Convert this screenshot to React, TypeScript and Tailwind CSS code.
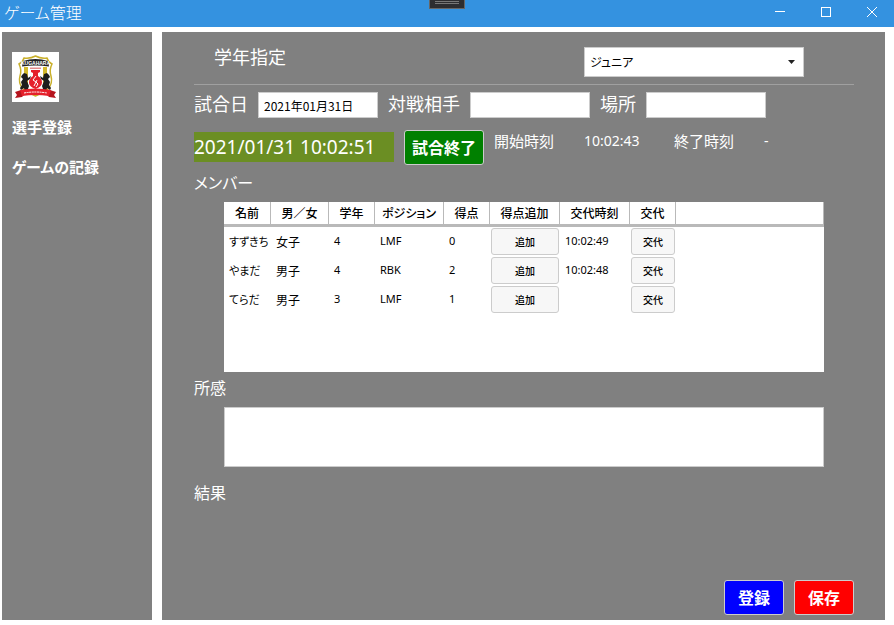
import { useState } from "react";

type Member = {
  name: string;
  gender: string;
  grade: number;
  position: string;
  score: number;
  changedAt: string;
};

const members: Member[] = [
  { name: "すずきち", gender: "女子", grade: 4, position: "LMF", score: 0, changedAt: "10:02:49" },
  { name: "やまだ", gender: "男子", grade: 4, position: "RBK", score: 2, changedAt: "10:02:48" },
  { name: "てらだ", gender: "男子", grade: 3, position: "LMF", score: 1, changedAt: "" },
];

const columns = [
  { label: "名前", width: "w-[47px]" },
  { label: "男／女", width: "w-[58px]" },
  { label: "学年", width: "w-[46px]" },
  { label: "ポジション", width: "w-[69px]" },
  { label: "得点", width: "w-[46px]" },
  { label: "得点追加", width: "w-[70px]" },
  { label: "交代時刻", width: "w-[70px]" },
  { label: "交代", width: "w-[46px]" },
];

function Emblem() {
  return (
    <svg viewBox="0 0 47 50" className="h-[50px] w-[47px]" role="img" aria-label="クラブのエンブレム">
      <rect width="47" height="50" fill="#fff" />
      <path
        d="M12 6 Q18 7 23.500 4 Q29 7 35 6 Q36 10 40 12 Q37 18 39 24 Q41 31 36 37 Q31 41 23.500 44 Q16 41 11 37 Q6 31 8 24 Q10 18 7 12 Q11 10 12 6Z"
        fill="#fff"
        stroke="#c9b02c"
        strokeWidth="1.500"
      />
      <path d="M12 15h4v23h-4z M31 15h4v23h-4z" fill="#d3b92d" />
      <path d="M11 9 Q23.500 5 36 9 L37 14.500 Q23.500 12.500 10 14.500Z" fill="#222" />
      <text x="23.500" y="12.500" textAnchor="middle" className="fill-white font-['Liberation_Sans'] text-[5px] font-bold">
        KUGAHARA
      </text>
      <path d="M18 15.500h11v1.500H18z" fill="#e58b8b" />
      <path d="M19 18h9v2l-2 1v3q4 2.500 4 6.500t-6.500 6.500q-6.500-2.500-6.500-6.500t4-6.500v-3l-2-1z" fill="#e5202b" />
      <path d="M24 24l-3 4 3 2-2 4M25 28l-1 2 2 2-2 3" fill="none" stroke="#fff" strokeWidth="1" />
      <path
        d="M10 23l2-2 3 1 1 4 3-2-1 3-3 2 2 5-1 3 1 2h-4l-1-3-3 2-1-2 2-3-1-3 2-3-2-2z"
        fill="#1d1d1d"
      />
      <path
        d="M37 23l-2-2-3 1-1 4-3-2 1 3 3 2-2 5 1 3-1 2h4l1-3 3 2 1-2-2-3 1-3-2-3 2-2z"
        fill="#1d1d1d"
      />
      <path d="M3 40l6-2 3 5-2 2-7 1 2-3zM44 40l-6-2-3 5 2 2 7 1-2-3z" fill="#b5141e" />
      <path d="M8 38 Q23.500 35 39 38 L37 44 Q23.500 42 10 44Z" fill="#e5202b" />
      <path d="M12 41 Q23.500 39 35 41" fill="none" stroke="#fff" strokeWidth="1" strokeDasharray="2 .6" />
    </svg>
  );
}

const captionButton = "flex h-6 w-[46px] items-center justify-center pl-[2px]";

function TitleBar() {
  return (
    <header className="relative flex h-[27px] shrink-0 items-start justify-between bg-[#3492e0] text-white">
      <h1 className="pl-1 text-base leading-6 font-light">ゲーム管理</h1>
      <div className="absolute top-0 left-1/2 flex h-[9px] w-9 -translate-x-1/2 flex-col items-center gap-px border border-t-0 border-[#666] bg-[#2d2d30] pt-px">
        <span className="h-px w-6 bg-[#777]" />
        <span className="h-px w-6 bg-[#777]" />
      </div>
      <div className="flex">
        <button type="button" aria-label="最小化" className={captionButton}>
          <svg width="10" height="10" viewBox="0 0 10 10" shapeRendering="crispEdges">
            <path d="M0 4h10v1H0z" fill="currentColor" />
          </svg>
        </button>
        <button type="button" aria-label="最大化" className={captionButton}>
          <svg width="10" height="10" viewBox="0 0 10 10" shapeRendering="crispEdges">
            <path d="M.5 .5h9v9h-9z" fill="none" stroke="currentColor" />
          </svg>
        </button>
        <button type="button" aria-label="閉じる" className={captionButton}>
          <svg width="10" height="10" viewBox="0 0 10 10">
            <path d="M0 0l10 10M10 0L0 10" stroke="currentColor" />
          </svg>
        </button>
      </div>
    </header>
  );
}

function Field({ id, label, initial = "" }: { id: string; label: string; initial?: string }) {
  const [value, setValue] = useState(initial);
  return (
    <div className="flex items-start gap-[10px]">
      <label htmlFor={id} className="text-lg leading-[22px]">
        {label}
      </label>
      <input
        id={id}
        type="text"
        value={value}
        onChange={(e) => setValue(e.target.value)}
        className="h-[26px] w-[120px] border border-[#ccc] bg-white px-[5px] text-xs text-black"
      />
    </div>
  );
}

const rowButton =
  "block h-[27px] w-full rounded-[3px] border border-[#ccc] bg-[#f7f7f7] text-[10px] font-medium text-black";
const actionButton = "h-[35px] rounded-[3px] border border-[#ccc] pb-[2px] text-base font-bold";
const latinCell = "p-0 pl-[5px] font-['Noto_Sans'] text-[11px]";

function MemberTable() {
  return (
    <div className="mx-[30px] min-h-[170px] bg-white text-black">
      <table aria-label="メンバー" className="w-full table-fixed border-separate border-spacing-0 text-left text-xs">
        <thead>
          <tr>
            {columns.map((c) => (
              <th
                key={c.label}
                scope="col"
                className={`${c.width} h-[25px] border-r border-b-3 border-[#b9b9b9] p-0 text-center font-medium whitespace-nowrap`}
              >
                {c.label}
              </th>
            ))}
            <td className="border-r border-b-3 border-[#b9b9b9] p-0" />
          </tr>
        </thead>
        <tbody>
          {members.map((m) => (
            <tr key={m.name} className="h-[29px]">
              <td className="p-0 pl-[5px] text-[11px] whitespace-nowrap">{m.name}</td>
              <td className="p-0 pl-[5px]">{m.gender}</td>
              <td className={latinCell}>{m.grade}</td>
              <td className={latinCell}>{m.position}</td>
              <td className={latinCell}>{m.score}</td>
              <td className="px-px py-0">
                <button type="button" className={rowButton}>
                  追加
                </button>
              </td>
              <td className={latinCell}>{m.changedAt}</td>
              <td className="px-px py-0">
                <button type="button" className={rowButton}>
                  交代
                </button>
              </td>
              <td className="p-0" />
            </tr>
          ))}
        </tbody>
      </table>
    </div>
  );
}

export default function App() {
  return (
    <div className="flex min-h-screen flex-col bg-white font-['Noto_Sans_CJK_JP',sans-serif] text-white [font-feature-settings:'palt']">
      <TitleBar />
      <div className="flex flex-1 gap-[10px] pt-[5px] pr-[9px] pb-[5px] pl-[2px]">
        <nav className="flex w-[150px] shrink-0 flex-col items-start bg-[#808080] px-[10px] pt-5 text-[15px] leading-5 font-bold">
          <Emblem />
          <a href="#players" className="mt-[15px]">
            選手登録
          </a>
          <a href="#games" className="mt-5">
            ゲームの記録
          </a>
        </nav>

        <main className="flex flex-1 flex-col bg-[#808080] pr-[31px] pb-[5px] pl-8">
          <div className="flex items-start justify-between border-b border-[#a0a0a0] pt-[15px] pr-[50px] pb-[7px] pl-5">
            <label htmlFor="grade" className="text-lg leading-[18px]">
              学年指定
            </label>
            <div className="relative">
              <select
                id="grade"
                defaultValue="junior"
                className="block h-[30px] w-[220px] appearance-none border border-[#ccc] bg-white pl-[5px] text-xs text-black"
              >
                <option value="junior">ジュニア</option>
              </select>
              <svg
                width="7"
                height="4"
                viewBox="0 0 7 4"
                className="pointer-events-none absolute top-[13px] right-[9px]"
              >
                <path d="M0 0h7L3.500 4z" fill="#222" />
              </svg>
            </div>
          </div>

          <div className="mt-[7px] flex gap-[10px]">
            <Field id="date" label="試合日" initial="2021年01月31日" />
            <Field id="opponent" label="対戦相手" />
            <Field id="place" label="場所" />
          </div>

          <div className="mt-3 flex gap-[10px]">
            <time className="mt-[2px] h-[30px] w-[200px] bg-[#6b8e23] font-['Noto_Sans'] text-[19px] leading-[30px]">
              2021/01/31 10:02:51
            </time>
            <button type="button" className={`${actionButton} w-20 bg-[#008000]`}>
              試合終了
            </button>
            <dl className="flex text-[15px] leading-[22px]">
              <dt className="w-[90px]">開始時刻</dt>
              <dd className="w-[90px] font-['Noto_Sans'] text-sm leading-[22px]">10:02:43</dd>
              <dt className="w-[90px]">終了時刻</dt>
              <dd className="font-['Noto_Sans'] text-sm leading-[22px]">-</dd>
            </dl>
          </div>

          <h2 className="mt-[5px] mb-2 text-base leading-6">メンバー</h2>
          <MemberTable />

          <label htmlFor="impressions" className="mt-[3px] mb-2 text-base leading-6">
            所感
          </label>
          <textarea
            id="impressions"
            className="mx-[30px] block h-[60px] resize-none border border-[#ccc] bg-white px-[5px] text-xs text-black"
          />

          <h2 className="mt-[13px] text-base leading-6">結果</h2>

          <div className="mt-auto flex justify-end gap-[10px]">
            <button type="button" className={`${actionButton} w-[60px] bg-[#0000ff]`}>
              登録
            </button>
            <button type="button" className={`${actionButton} w-[60px] bg-[#ff0000]`}>
              保存
            </button>
          </div>
        </main>
      </div>
    </div>
  );
}
